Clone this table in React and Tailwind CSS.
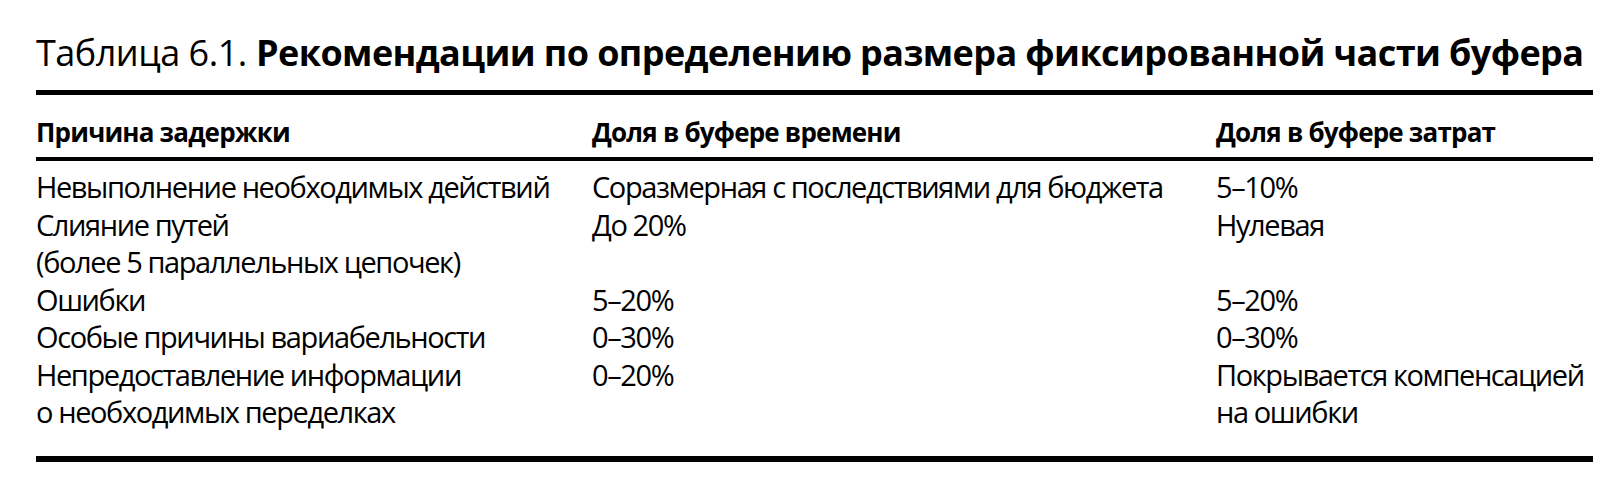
const ROWS = [
  {
    cause: ['Невыполнение необходимых действий'],
    time: ['Соразмерная с последствиями для бюджета'],
    cost: ['5–10%'],
  },
  {
    cause: ['Слияние путей', '(более 5 параллельных цепочек)'],
    time: ['До 20%'],
    cost: ['Нулевая'],
  },
  { cause: ['Ошибки'], time: ['5–20%'], cost: ['5–20%'] },
  { cause: ['Особые причины вариабельности'], time: ['0–30%'], cost: ['0–30%'] },
  {
    cause: ['Непредоставление информации', 'о необходимых переделках'],
    time: ['0–20%'],
    cost: ['Покрывается компенсацией', 'на ошибки'],
  },
]

function Cell({ lines }) {
  return (
    <div>
      {lines.map((l, i) => (
        <p key={i} className="whitespace-nowrap">{l}</p>
      ))}
    </div>
  )
}

export default function App() {
  return (
    <div
      className="w-[1613px] h-[496px] bg-white text-black overflow-hidden"
      style={{ fontFamily: '"Open Sans", "Noto Sans", sans-serif' }}
    >
      <div className="ml-[36px] w-[1557px]">
        {/* Caption */}
        <h1 className="pt-[33px] text-[36px] leading-[40px] whitespace-nowrap">
          <span className="font-normal tracking-[-0.5px]">Таблица 6.1.</span>{' '}
          <span className="font-bold tracking-[-0.6px]">Рекомендации по определению размера фиксированной части буфера</span>
        </h1>

        {/* Table */}
        <div className="mt-[17px] border-t-[5px] border-black">
          <div className="grid grid-cols-[556px_624px_1fr] pt-[21px] pb-[9px] text-[26px] leading-[32px] font-bold tracking-[-0.8px] border-b-[4px] border-black">
            <p>Причина задержки</p>
            <p>Доля в буфере времени</p>
            <p>Доля в буфере затрат</p>
          </div>

          <div className="pt-[7px] pb-[25px] text-[29px] leading-[37.5px] tracking-[-1.4px] border-b-[6px] border-black">
            {ROWS.map((r, i) => (
              <div key={i} className="grid grid-cols-[556px_624px_1fr]">
                <Cell lines={r.cause} />
                <Cell lines={r.time} />
                <Cell lines={r.cost} />
              </div>
            ))}
          </div>
        </div>
      </div>
    </div>
  )
}
